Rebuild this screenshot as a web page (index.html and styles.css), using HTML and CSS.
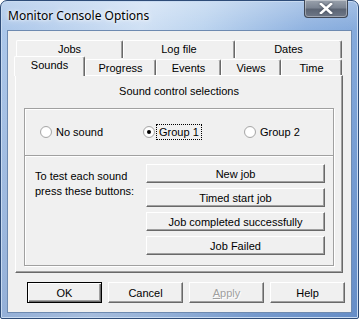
FILE: index.html
```html
<!DOCTYPE html>
<html lang="en">
<head>
    <meta charset="UTF-8">
    <meta name="viewport" content="width=device-width, initial-scale=1.0">
    <title>Monitor Console Options</title>
    <link rel="stylesheet" href="styles.css">
</head>
<body>
  <div class="window">
    <div class="titlebar">
      <span class="title">Monitor Console Options</span>
      <button class="close-btn" aria-label="Close">
        <svg width="14" height="11" viewBox="0 0 14 11">
          <path d="M2 1 L12 10 M12 1 L2 10" stroke="#ffffff" stroke-width="2.6" stroke-linecap="square"/>
        </svg>
      </button>
    </div>

    <div class="client">
      <div class="tabs">
        <div class="tab-row back">
          <div class="tab w107">Jobs</div>
          <div class="tab w112">Log file</div>
          <div class="tab w107">Dates</div>
        </div>
        <div class="tab-row front">
          <div class="tab selected">Sounds</div>
          <div class="tab w71">Progress</div>
          <div class="tab w65">Events</div>
          <div class="tab w60">Views</div>
          <div class="tab w61">Time</div>
        </div>
        <div class="panel">
          <p class="panel-title">Sound control selections</p>
          <div class="group">
            <div class="radio-row">
              <label class="radio"><span class="dot"></span>No sound</label>
              <label class="radio checked"><span class="dot"></span><span class="focus">Group 1</span></label>
              <label class="radio"><span class="dot"></span>Group 2</label>
            </div>
            <div class="test-row">
              <p class="test-text">To test each sound<br>press these buttons:</p>
              <div class="test-buttons">
                <button class="btn">New job</button>
                <button class="btn">Timed start job</button>
                <button class="btn">Job completed successfully</button>
                <button class="btn">Job Failed</button>
              </div>
            </div>
          </div>
        </div>
      </div>

      <div class="dialog-buttons">
        <button class="btn big default">OK</button>
        <button class="btn big">Cancel</button>
        <button class="btn big disabled"><u>A</u>pply</button>
        <button class="btn big">Help</button>
      </div>
    </div>
  </div>
</body>
</html>
```

FILE: styles.css
```css
*{
  margin: 0;
  padding: 0;
  box-sizing: border-box;
}

body{
  width: 359px;
  height: 319px;
  overflow: hidden;
  background: #ffffff;
  font-family: 'Liberation Sans', Arial, sans-serif;
  font-size: 11px;
  color: #000;
}

.window{
  width: 359px;
  height: 319px;
  border: 1px solid #2e4c78;
  border-radius: 7px 7px 2px 2px;
  background:
    linear-gradient(to bottom, rgba(255,255,255,0.25) 0%, rgba(255,255,255,0) 30px, rgba(40,80,150,0.25) 100%),
    linear-gradient(100deg, #a9c5e9 0%, #cfe0f4 35%, #bcd4ef 50%, #8fb2e0 75%, #7aa2d8 100%);
  box-shadow: inset 0 0 0 1px #c9dbf1;
}

.titlebar{
  height: 29px;
  display: flex;
  justify-content: space-between;
  align-items: flex-start;
  padding-left: 7px;
  padding-right: 10px;
}

.title{
  font-family: 'Noto Sans', 'Open Sans', sans-serif;
  font-size: 12px;
  line-height: 30px;
  color: #000;
  text-shadow: 0 0 6px #ffffff, 0 0 3px #ffffff;
}

.close-btn{
  width: 44px;
  height: 18px;
  margin-top: -1px;
  border: 1px solid #3f4755;
  border-top: none;
  border-radius: 0 0 4px 4px;
  background: linear-gradient(#9aa2ad 0%, #7c8593 45%, #5c6574 55%, #6e7888 100%);
  box-shadow: inset 0 0 0 1px rgba(255,255,255,0.35);
  display: flex;
  justify-content: center;
  align-items: center;
}

.close-btn svg{
  filter: drop-shadow(0 0 1px #3a4250);
}

.client{
  width: 345px;
  height: 283px;
  margin-left: 6px;
  background: #f0f0f0;
  border: 1px solid #6e8ab0;
  padding-top: 9px;
}

.tabs{
  margin-left: 7px;
  width: 328px;
}

.tab-row{
  display: flex;
  height: 18px;
}

.tab-row.back{
  padding-left: 1px;
}

.tab-row.front{
  height: 17px;
  position: relative;
  z-index: 2;
}

.tab{
  height: 18px;
  background: #f0f0f0;
  border-top: 1px solid #ffffff;
  border-left: 1px solid #ffffff;
  border-right: 1px solid #696969;
  box-shadow: inset -1px 0 0 #a0a0a0;
  border-radius: 2px 2px 0 0;
  text-align: center;
  line-height: 16px;
}

.tab-row.front .tab{
  height: 16px;
  margin-top: 1px;
}

.tab-row.front .tab.selected{
  width: 71px;
  height: 20px;
  margin-top: -2px;
  margin-left: -1px;
  line-height: 17px;
}

.w107{ width: 107px; }
.w112{ width: 112px; }
.w71{ width: 71px; }
.w65{ width: 65px; }
.w60{ width: 60px; }
.w61{ width: 61px; }

.panel{
  height: 198px;
  border-top: 1px solid #ffffff;
  border-left: 1px solid #ffffff;
  border-right: 1px solid #696969;
  border-bottom: 1px solid #696969;
  box-shadow: inset -1px -1px 0 #a0a0a0;
  padding: 9px 8px 0 8px;
}

.panel-title{
  text-align: center;
  line-height: 13px;
  margin-bottom: 10px;
}

.group{
  width: 310px;
  height: 158px;
  border: 1px solid #a0a0a0;
  box-shadow: inset 1px 1px 0 #ffffff, 1px 1px 0 #ffffff;
}

.radio-row{
  height: 47px;
  display: grid;
  grid-template-columns: 103px 101px 1fr;
  align-items: center;
  padding-left: 15px;
  border-bottom: 1px solid #a0a0a0;
  box-shadow: 0 1px 0 #ffffff;
}

.radio{
  display: flex;
  align-items: center;
  column-gap: 4px;
  line-height: 14px;
}

.dot{
  width: 12px;
  height: 12px;
  border-radius: 50%;
  border: 1px solid #a8a8a8;
  background: radial-gradient(circle, #ffffff 55%, #e9e9e9 100%);
  position: relative;
}

.radio.checked .dot::after{
  content: "";
  position: absolute;
  left: 3px;
  top: 3px;
  width: 4px;
  height: 4px;
  border-radius: 50%;
  background: #000;
}

.focus{
  outline: 1px dotted #000;
  outline-offset: 0;
  padding: 0 2px;
  margin-left: -2px;
}

.test-row{
  display: flex;
  justify-content: space-between;
  padding: 8px 8px 0 10px;
}

.test-text{
  line-height: 15px;
  padding-top: 5px;
}

.test-buttons{
  width: 179px;
  display: flex;
  flex-direction: column;
  row-gap: 5px;
}

.btn{
  height: 19px;
  font-family: 'Liberation Sans', Arial, sans-serif;
  font-size: 11px;
  color: #000;
  background: #f0f0f0;
  border-top: 1px solid #ffffff;
  border-left: 1px solid #ffffff;
  border-right: 1px solid #696969;
  border-bottom: 1px solid #696969;
  box-shadow: inset -1px -1px 0 #a0a0a0;
}

.dialog-buttons{
  display: flex;
  column-gap: 6px;
  margin-top: 9px;
  padding-left: 19px;
}

.btn.big{
  width: 75px;
  height: 21px;
}

.btn.default{
  border: 1px solid #000;
  box-shadow: inset 1px 1px 0 #ffffff, inset -1px -1px 0 #696969, inset -2px -2px 0 #a0a0a0;
}

.btn.disabled{
  color: #a0a0a0;
  text-shadow: 1px 1px 0 #ffffff;
}
```
